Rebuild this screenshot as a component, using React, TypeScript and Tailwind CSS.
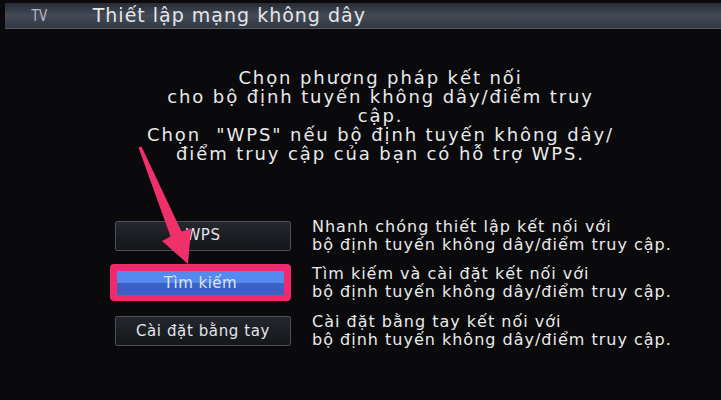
import React from "react";

const options = [
  { label: "WPS", desc: ["Nhanh chóng thiết lập kết nối với", "bộ định tuyến không dây/điểm truy cập."] },
  { label: "Tìm kiếm", desc: ["Tìm kiếm và cài đặt kết nối với", "bộ định tuyến không dây/điểm truy cập."], active: true },
  { label: "Cài đặt bằng tay", desc: ["Cài đặt bằng tay kết nối với", "bộ định tuyến không dây/điểm truy cập."] },
];

const rowClass = ["mt-[55px] h-[35px]", "mt-[11px] h-[37px]", "mt-[12px] h-[36px]"];

export default function App() {
  return (
    <div
      className="relative w-[721px] h-[400px] overflow-hidden bg-[#0a0a0c] text-[#e9e9ea]"
      style={{ fontFamily: '"DejaVu Sans", "Noto Sans", sans-serif' }}
    >
      {/* title bar */}
      <div className="mt-[3px] ml-[5px] h-[26px] flex items-center bg-gradient-to-b from-[#272c35] via-[#444b56] to-[#323842] border-b border-[#535a65]">
        <span className="ml-[24px] inline-block scale-x-75 text-[16px] leading-none text-[#b4bcd2]">TV</span>
        <span className="ml-[43px] text-[19px] leading-none tracking-[1px] text-[#e4e6ea]">Thiết lập mạng không dây</span>
      </div>

      {/* intro */}
      <div className="mt-[39px] pl-[40px] text-center text-[18px] leading-[19px] tracking-[1.9px]">
        <p>Chọn phương pháp kết nối</p>
        <p>cho bộ định tuyến không dây/điểm truy</p>
        <p>cập.</p>
        <p>Chọn &nbsp;"WPS" nếu bộ định tuyến không dây/</p>
        <p>điểm truy cập của bạn có hỗ trợ WPS.</p>
      </div>

      {/* options */}
      {options.map((o, i) => (
        <div key={o.label} className={`flex items-center ${rowClass[i]}`}>
          <div className="ml-[115px] w-[176px] flex items-center">
            {o.active ? (
              <div className="-ml-[5px] w-[185px] h-[37px] rounded-[4px] bg-[#f2296a] p-[7px] pb-[6px]">
                <div className="h-full flex items-center justify-center text-[15px] tracking-[0.5px] text-[#dde5f6] bg-gradient-to-b from-[#5489f0] from-50% to-[#3961c6] to-50%">
                  {o.label}
                </div>
              </div>
            ) : (
              <div className="w-[176px] h-[30px] flex items-center justify-center border border-[#4b5059] rounded-[2px] bg-gradient-to-b from-[#24272e] to-[#14161a] text-[15px] tracking-[0.6px] text-[#e2e4e8]">
                {o.label}
              </div>
            )}
          </div>
          <div className="ml-[21px] text-[16px] leading-[18px] tracking-[1px]">
            <p>{o.desc[0]}</p>
            <p>{o.desc[1]}</p>
          </div>
        </div>
      ))}

      {/* pink arrow */}
      <svg className="absolute left-0 top-0" width="721" height="400" viewBox="0 0 721 400">
        <polygon
          points="138.5,147.5 170.5,236.5 162,241 188,264 191,228.5 181.5,231.5 141.5,146.5"
          fill="#f0306b"
        />
      </svg>
    </div>
  );
}
